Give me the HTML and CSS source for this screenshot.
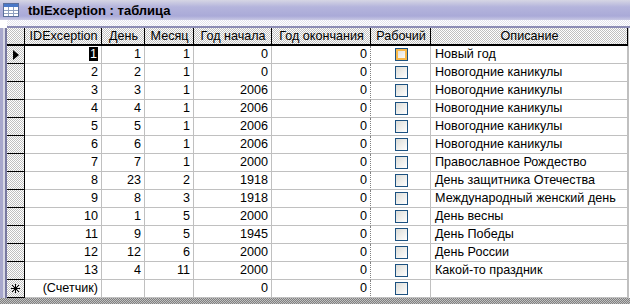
FILE: index.html
```html
<!DOCTYPE html>
<html lang="ru">
  <head>
    <meta charset="UTF-8" />
    <title>tblException : таблица</title>
    <link rel="stylesheet" href="styles.css">
  </head>
  <body>
    <div class="window">
      <div class="titlebar">
        <svg class="icon" width="16" height="14" viewBox="0 0 16 14">
          <rect x="0.5" y="0.5" width="15" height="13" fill="#fff" stroke="#5a6f9c"/>
          <rect x="1" y="1" width="14" height="3" fill="#4a78c8"/>
          <path d="M1 7.5h14M1 10.5h14M5.5 4v9M10.5 4v9" stroke="#8fa0c0"/>
        </svg>
        <span class="title">tblException : таблица</span>
      </div>
      <div class="gap"></div>
      <div class="body">
        <div class="frame"></div>
        <div class="grid">
          <div class="row head">
            <div class="sel"></div>
            <div class="c">IDException</div>
            <div class="c">День</div>
            <div class="c">Месяц</div>
            <div class="c">Год начала</div>
            <div class="c">Год окончания</div>
            <div class="c">Рабочий</div>
            <div class="c">Описание</div>
          </div>
          <div class="row">
            <div class="sel"><span class="arrow"></span></div>
            <div class="c num"><span class="hl">1</span></div>
            <div class="c num">1</div>
            <div class="c num">1</div>
            <div class="c num">0</div>
            <div class="c num dot">0</div>
            <div class="c chk"><span class="box hot"></span></div>
            <div class="c">Новый год</div>
          </div>
          <div class="row">
            <div class="sel"></div>
            <div class="c num">2</div><div class="c num">2</div><div class="c num">1</div>
            <div class="c num">0</div><div class="c num dot">0</div>
            <div class="c chk"><span class="box"></span></div>
            <div class="c">Новогодние каникулы</div>
          </div>
          <div class="row">
            <div class="sel"></div>
            <div class="c num">3</div><div class="c num">3</div><div class="c num">1</div>
            <div class="c num">2006</div><div class="c num dot">0</div>
            <div class="c chk"><span class="box"></span></div>
            <div class="c">Новогодние каникулы</div>
          </div>
          <div class="row">
            <div class="sel"></div>
            <div class="c num">4</div><div class="c num">4</div><div class="c num">1</div>
            <div class="c num">2006</div><div class="c num dot">0</div>
            <div class="c chk"><span class="box"></span></div>
            <div class="c">Новогодние каникулы</div>
          </div>
          <div class="row">
            <div class="sel"></div>
            <div class="c num">5</div><div class="c num">5</div><div class="c num">1</div>
            <div class="c num">2006</div><div class="c num dot">0</div>
            <div class="c chk"><span class="box"></span></div>
            <div class="c">Новогодние каникулы</div>
          </div>
          <div class="row">
            <div class="sel"></div>
            <div class="c num">6</div><div class="c num">6</div><div class="c num">1</div>
            <div class="c num">2006</div><div class="c num dot">0</div>
            <div class="c chk"><span class="box"></span></div>
            <div class="c">Новогодние каникулы</div>
          </div>
          <div class="row">
            <div class="sel"></div>
            <div class="c num">7</div><div class="c num">7</div><div class="c num">1</div>
            <div class="c num">2000</div><div class="c num dot">0</div>
            <div class="c chk"><span class="box"></span></div>
            <div class="c">Православное Рождество</div>
          </div>
          <div class="row">
            <div class="sel"></div>
            <div class="c num">8</div><div class="c num">23</div><div class="c num">2</div>
            <div class="c num">1918</div><div class="c num dot">0</div>
            <div class="c chk"><span class="box"></span></div>
            <div class="c">День защитника Отечества</div>
          </div>
          <div class="row">
            <div class="sel"></div>
            <div class="c num">9</div><div class="c num">8</div><div class="c num">3</div>
            <div class="c num">1918</div><div class="c num dot">0</div>
            <div class="c chk"><span class="box"></span></div>
            <div class="c">Международный женский день</div>
          </div>
          <div class="row">
            <div class="sel"></div>
            <div class="c num">10</div><div class="c num">1</div><div class="c num">5</div>
            <div class="c num">2000</div><div class="c num dot">0</div>
            <div class="c chk"><span class="box"></span></div>
            <div class="c">День весны</div>
          </div>
          <div class="row">
            <div class="sel"></div>
            <div class="c num">11</div><div class="c num">9</div><div class="c num">5</div>
            <div class="c num">1945</div><div class="c num dot">0</div>
            <div class="c chk"><span class="box"></span></div>
            <div class="c">День Победы</div>
          </div>
          <div class="row">
            <div class="sel"></div>
            <div class="c num">12</div><div class="c num">12</div><div class="c num">6</div>
            <div class="c num">2000</div><div class="c num dot">0</div>
            <div class="c chk"><span class="box"></span></div>
            <div class="c">День России</div>
          </div>
          <div class="row">
            <div class="sel"></div>
            <div class="c num">13</div><div class="c num">4</div><div class="c num">11</div>
            <div class="c num">2000</div><div class="c num dot">0</div>
            <div class="c chk"><span class="box"></span></div>
            <div class="c">Какой-то праздник</div>
          </div>
          <div class="row">
            <div class="sel">
              <svg width="9" height="9" viewBox="0 0 9 9">
                <path d="M4.5 0v9M0 4.5h9M1 1l7 7M8 1l-7 7" stroke="#000" stroke-width="1"/>
              </svg>
            </div>
            <div class="c num">(Счетчик)</div><div class="c"></div><div class="c"></div>
            <div class="c num">0</div><div class="c num dot">0</div>
            <div class="c chk"><span class="box"></span></div>
            <div class="c"></div>
          </div>
        </div>
      </div>
      <div class="bottom"></div>
    </div>
  </body>
</html>
```

FILE: styles.css
```css
body {
  margin: 0;
  font-family: "Liberation Sans", Arial, sans-serif;
  font-size: 12.6px;
  color: #000;
  background: #fff;
}
.window {
  width: 630px;
  height: 304px;
  overflow: hidden;
  background: #fff;
}
.titlebar {
  height: 20px;
  display: flex;
  align-items: center;
  gap: 9px;
  padding-left: 3px;
  background: linear-gradient(#d6d6e4, #b4b4dc 35%, #aaaad8 80%, #c8c8e4);
}
.title {
  font-weight: bold;
  font-size: 13px;
}
.gap {
  height: 6px;
  background: repeating-conic-gradient(#e4e4ee 0 25%, #ffffff 0 50%) 0 0/2px 2px;
  border-bottom: 2px solid #8c8cb4;
  margin-left: 7px;
}
.body {
  display: flex;
}
.frame {
  width: 7px;
  background: linear-gradient(90deg, #a8a8cc 0 3px, #d8d8e4 3px 5px, #7878a0 5px 7px);
}
.grid {
  width: 621px;
  border-right: 1px solid #c0c0c0;
}
.row {
  display: grid;
  grid-template-columns: 18px 77px 43px 49px 78px 99px 60px 197px;
  height: 18px;
}
.c {
  box-sizing: border-box;
  height: 18px;
  line-height: 17px;
  padding: 0 3px 0 4px;
  border-right: 1px solid #c0c0c0;
  border-bottom: 1px solid #c0c0c0;
  white-space: nowrap;
  overflow: hidden;
}
.num {
  text-align: right;
}
.dot {
  border-right: 1px dotted #808080;
}
.sel {
  box-sizing: border-box;
  height: 18px;
  border-right: 1px solid #000;
  border-bottom: 1px solid #000;
  background: repeating-conic-gradient(#c0c0c0 0 25%, #ffffff 0 50%) 0 0/2px 2px;
  display: flex;
  align-items: center;
  justify-content: center;
}
.head .c,
.head .sel {
  background: repeating-conic-gradient(#c0c0c0 0 25%, #ffffff 0 50%) 0 0/2px 2px;
  border-right: 1px solid #000;
  border-bottom: 2px solid #000;
  text-align: center;
  line-height: 16px;
}
.arrow {
  width: 0;
  height: 0;
  border-top: 5px solid transparent;
  border-bottom: 5px solid transparent;
  border-left: 6px solid #000;
  margin-left: 1px;
}
.hl {
  background: #000;
  color: #fff;
  padding: 0 1px;
}
.chk {
  display: flex;
  align-items: center;
  justify-content: center;
}
.box {
  box-sizing: border-box;
  width: 13px;
  height: 13px;
  border: 1px solid #1c5180;
  background: linear-gradient(135deg, #dcdcd7, #ffffff);
}
.box.hot {
  box-shadow: inset 0 0 0 2px #f8b848;
}
.bottom {
  height: 6px;
  background: repeating-conic-gradient(#808080 0 25%, #c0c0c0 0 50%) 0 0/2px 2px;
}
```
